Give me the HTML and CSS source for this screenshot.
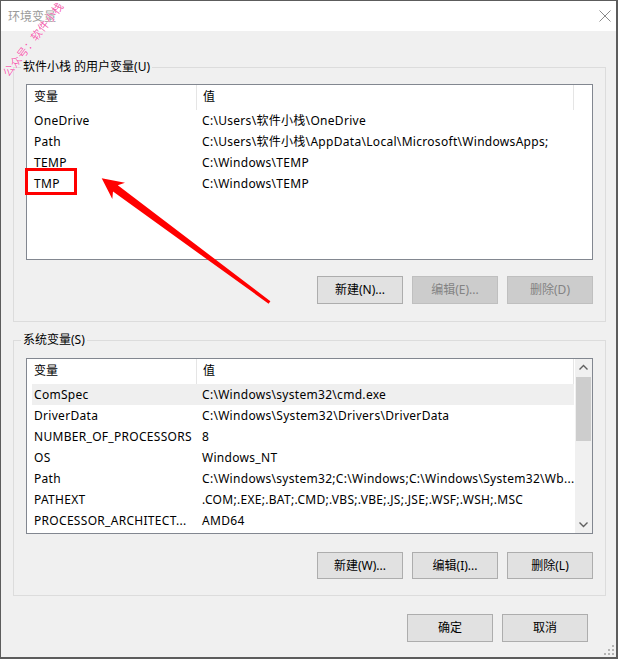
FILE: index.html
```html
<!DOCTYPE html>
<html lang="zh-CN">
<head>
<meta charset="utf-8">
<title>环境变量</title>
<link rel="stylesheet" href="styles.css">
</head>
<body>
<div class="window">
  <div class="titlebar">
    <span class="title">环境变量</span>
    <svg class="close" width="12" height="12" viewBox="0 0 12 12"><path d="M0.5 0.5 L11.5 11.5 M11.5 0.5 L0.5 11.5" stroke="#8a8a8a" stroke-width="1" fill="none"/></svg>
  </div>
  <div class="content">
    <fieldset class="group group-user">
      <legend>软件小栈 的用户变量(U)</legend>
      <div class="list">
        <div class="table">
          <div class="head"><div class="hcell h1">变量</div><div class="hcell h2">值</div></div>
          <div class="row"><span class="c1">OneDrive</span><span class="c2">C:\Users\软件小栈\OneDrive</span></div>
          <div class="row"><span class="c1">Path</span><span class="c2">C:\Users\软件小栈\AppData\Local\Microsoft\WindowsApps;</span></div>
          <div class="row"><span class="c1">TEMP</span><span class="c2">C:\Windows\TEMP</span></div>
          <div class="row"><span class="c1">TMP</span><span class="c2">C:\Windows\TEMP</span></div>
        </div>
      </div>
      <div class="btns">
        <button class="btn">新建(N)...</button>
        <button class="btn" disabled>编辑(E)...</button>
        <button class="btn" disabled>删除(D)</button>
      </div>
    </fieldset>

    <fieldset class="group group-sys">
      <legend>系统变量(S)</legend>
      <div class="list">
        <div class="table">
          <div class="head"><div class="hcell h1">变量</div><div class="hcell h2">值</div></div>
          <div class="row sel"><span class="c1">ComSpec</span><span class="c2">C:\Windows\system32\cmd.exe</span></div>
          <div class="row"><span class="c1">DriverData</span><span class="c2">C:\Windows\System32\Drivers\DriverData</span></div>
          <div class="row"><span class="c1">NUMBER_OF_PROCESSORS</span><span class="c2">8</span></div>
          <div class="row"><span class="c1">OS</span><span class="c2">Windows_NT</span></div>
          <div class="row"><span class="c1">Path</span><span class="c2">C:\Windows\system32;C:\Windows;C:\Windows\System32\Wb...</span></div>
          <div class="row"><span class="c1">PATHEXT</span><span class="c2">.COM;.EXE;.BAT;.CMD;.VBS;.VBE;.JS;.JSE;.WSF;.WSH;.MSC</span></div>
          <div class="row"><span class="c1">PROCESSOR_ARCHITECT...</span><span class="c2">AMD64</span></div>
        </div>
        <div class="scrollbar">
          <svg class="sb-arrow" width="17" height="17" viewBox="0 0 17 17"><path d="M4.5 10.5 L8.5 6.5 L12.5 10.5" stroke="#606060" stroke-width="1.4" fill="none"/></svg>
          <div class="thumb"></div>
          <div class="sb-track"></div>
          <svg class="sb-arrow" width="17" height="17" viewBox="0 0 17 17"><path d="M4.5 6.5 L8.5 10.5 L12.5 6.5" stroke="#606060" stroke-width="1.4" fill="none"/></svg>
        </div>
      </div>
      <div class="btns btns-sys">
        <button class="btn">新建(W)...</button>
        <button class="btn">编辑(I)...</button>
        <button class="btn">删除(L)</button>
      </div>
    </fieldset>

    <div class="dialog-btns">
      <button class="btn">确定</button>
      <button class="btn">取消</button>
    </div>
  </div>

  <svg class="grip" width="12" height="12" viewBox="0 0 12 12">
    <rect x="9" y="1" width="2" height="2" fill="#b4b4b4"/>
    <rect x="5" y="5" width="2" height="2" fill="#b4b4b4"/>
    <rect x="9" y="5" width="2" height="2" fill="#b4b4b4"/>
    <rect x="1" y="9" width="2" height="2" fill="#b4b4b4"/>
    <rect x="5" y="9" width="2" height="2" fill="#b4b4b4"/>
    <rect x="9" y="9" width="2" height="2" fill="#b4b4b4"/>
  </svg>

  <div class="redbox"></div>
  <svg class="arrow" width="618" height="659" viewBox="0 0 618 659">
    <polygon points="101.7,178.3 125,182.7 117.8,185.2 270.4,301.3 268.6,303.7 113,191.6 112.3,199" fill="#ff0000"/>
  </svg>
  <div class="watermark">公众号：软件小栈</div>
</div>
</body>
</html>
```

FILE: styles.css
```css
* { box-sizing: border-box; }

html, body {
  margin: 0;
  padding: 0;
  background: #4a4a4a;
}

body {
  font-family: "Noto Sans", "Noto Sans CJK SC", sans-serif;
  font-size: 12px;
  color: #000;
}

.window {
  position: relative;
  width: 618px;
  height: 659px;
  background: #f0f0f0;
  border-top: 1px solid #5c5c5c;
  border-left: 1px solid #5c5c5c;
  border-right: 2px solid #5c5c5c;
  border-bottom: 2px solid #5c5c5c;
  overflow: hidden;
}

.titlebar {
  height: 30px;
  background: #fff;
  display: flex;
  align-items: center;
  justify-content: space-between;
  padding: 0 5px 0 7px;
}

.title {
  color: #9a9a9a;
  font-size: 12px;
  line-height: 16px;
  margin-top: 1px;
}

.close {
  display: block;
}

.content {
  padding: 0 10px 0 12px;
}

.group {
  margin: 0;
  border: 1px solid #dcdcdc;
  min-width: 0;
}

.group legend {
  font-size: 12px;
  line-height: 16px;
  padding: 0 2px;
  margin-left: -5px;
}

.group-user {
  margin-top: 28px;
  padding: 9px 12px 17px 12px;
}

.group-sys {
  margin-top: 10px;
  padding: 10px 12px 16px 12px;
}

.list {
  height: 176px;
  background: #fff;
  border: 1px solid #828790;
  display: flex;
  overflow: hidden;
}

.table {
  width: 548px;
  flex: none;
}

.head {
  display: flex;
  height: 25px;
}

.hcell {
  line-height: 24px;
  height: 25px;
  white-space: nowrap;
}

.h1 {
  width: 170px;
  padding-left: 7px;
  border-right: 1px solid #e5e5e5;
}

.h2 {
  width: 377px;
  padding-left: 6px;
  border-right: 1px solid #e5e5e5;
}

.row {
  display: flex;
  height: 21px;
  line-height: 21px;
  margin-left: 5px;
  width: 542px;
  white-space: nowrap;
  letter-spacing: 0.3px;
}

.row.sel {
  background: #efefef;
}

.c1 {
  width: 164px;
  padding-left: 2px;
  overflow: hidden;
  flex: none;
}

.c2 {
  flex: 1;
  padding-left: 6px;
  overflow: hidden;
}

.scrollbar {
  flex: 1;
  background: #f0f0f0;
  display: flex;
  flex-direction: column;
  align-items: center;
}

.sb-arrow {
  display: block;
  flex: none;
}

.thumb {
  width: 15px;
  height: 64px;
  margin-top: 1px;
  background: #cdcdcd;
  flex: none;
}

.sb-track {
  flex: 1;
}

.btns {
  display: flex;
  justify-content: flex-end;
  gap: 9px;
  margin-top: 16px;
}

.btns-sys {
  margin-top: 18px;
}

.btn {
  width: 86px;
  height: 28px;
  background: #e1e1e1;
  border: 1px solid #adadad;
  font-family: "Noto Sans", "Noto Sans CJK SC", sans-serif;
  font-size: 12px;
  color: #000;
  padding: 0;
  margin: 0;
  line-height: 16px;
}

.btns-sys .btn {
  height: 27px;
}

.btn:disabled {
  background: #cccccc;
  border-color: #bfbfbf;
  color: #838383;
}

.dialog-btns {
  display: flex;
  justify-content: flex-end;
  gap: 9px;
  margin-top: 18px;
  padding-right: 18px;
}

.grip {
  position: absolute;
  right: 1px;
  bottom: 1px;
  display: block;
}

.redbox {
  position: absolute;
  left: 24px;
  top: 167px;
  width: 52px;
  height: 27px;
  border: 3px solid #f00;
}

.arrow {
  position: absolute;
  left: -1px;
  top: -1px;
  pointer-events: none;
}

.watermark {
  position: absolute;
  left: 4px;
  top: 68px;
  width: 88px;
  font-size: 11px;
  line-height: 11px;
  letter-spacing: 0.3px;
  color: rgba(240, 70, 160, 0.85);
  text-shadow: 0 0 1px #fff, 0 0 1px #fff;
  transform-origin: 0 50%;
  transform: rotate(-52deg);
  white-space: nowrap;
}
```
